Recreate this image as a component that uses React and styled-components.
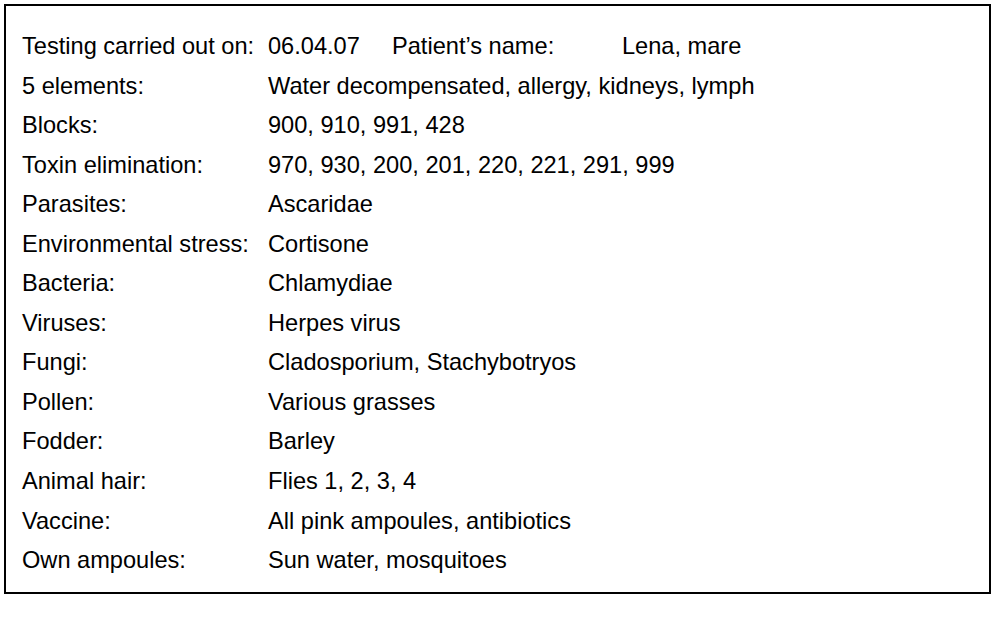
import React from 'react';
import styled, { createGlobalStyle } from 'styled-components';

const GlobalStyle = createGlobalStyle`
  body {
    margin: 0;
    background: #ffffff;
    font-family: "Liberation Sans", Arial, sans-serif;
    color: #000000;
  }
`;

const rows = [
  ['5 elements:', 'Water decompensated, allergy, kidneys, lymph'],
  ['Blocks:', '900, 910, 991, 428'],
  ['Toxin elimination:', '970, 930, 200, 201, 220, 221, 291, 999'],
  ['Parasites:', 'Ascaridae'],
  ['Environmental stress:', 'Cortisone'],
  ['Bacteria:', 'Chlamydiae'],
  ['Viruses:', 'Herpes virus'],
  ['Fungi:', 'Cladosporium, Stachybotryos'],
  ['Pollen:', 'Various grasses'],
  ['Fodder:', 'Barley'],
  ['Animal hair:', 'Flies 1, 2, 3, 4'],
  ['Vaccine:', 'All pink ampoules, antibiotics'],
  ['Own ampoules:', 'Sun water, mosquitoes'],
];

const App = () => (
  <Page>
    <GlobalStyle />
    <Report>
      <Label>Testing carried out on:</Label>
      <Value>
        <Stop width={124}>06.04.07</Stop>
        <Stop width={230}>Patient’s name:</Stop>
        <span>Lena, mare</span>
      </Value>
      {rows.map(([label, value]) => (
        <React.Fragment key={label}>
          <Label>{label}</Label>
          <Value>{value}</Value>
        </React.Fragment>
      ))}
    </Report>
  </Page>
);

export default App;

const Page = styled.div`
  padding: 4px 0 0 4px;
`;

const Report = styled.div`
  width: 987px;
  height: 590px;
  box-sizing: border-box;
  border: 2px solid #000000;
  padding: 21px 0 0 16px;
  display: grid;
  grid-template-columns: 246px 1fr;
  grid-auto-rows: 39.55px;
  align-content: start;
  font-size: 23.6px;
  line-height: 39.55px;
`;

const Label = styled.div`
  white-space: nowrap;
`;

const Value = styled.div`
  display: flex;
  white-space: nowrap;
`;

const Stop = styled.span`
  width: ${(p) => p.width}px;
  flex: none;
`;
